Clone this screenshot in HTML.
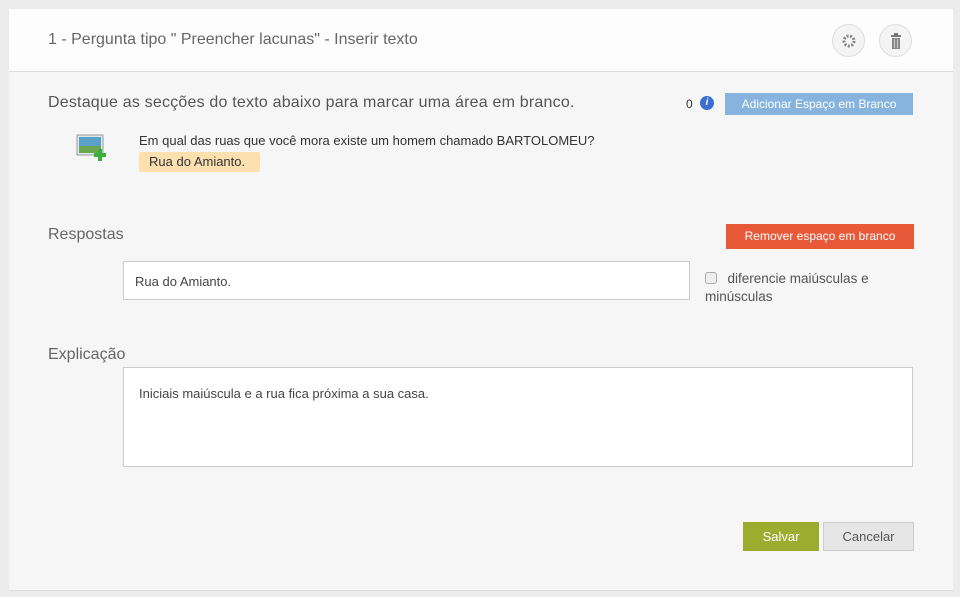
<!DOCTYPE html>
<html><head><meta charset="utf-8"><style>
*{margin:0;padding:0;box-sizing:border-box}
body{width:960px;height:597px;background:#ececec;font-family:"Liberation Sans",sans-serif;position:relative;overflow:hidden;color:#555}
.card{position:absolute;left:9px;top:9px;width:944px;height:582px;background:#f6f6f6;border-bottom:1px solid #ddd}
.hdr{position:absolute;left:0;top:0;width:944px;height:63px;background:#fdfdfd;border-bottom:1px solid #ddd}
.a{position:absolute;white-space:nowrap}
.circ{position:absolute;width:33px;height:33px;border-radius:50%;border:1px solid #ddd;background:#f4f4f4}
.btn{position:absolute;color:#fff;font-size:12px;text-align:center}
.box{position:absolute;background:#fff;border:1px solid #ccc}
</style></head><body>
<div class="card">
<div class="hdr">
<div class="a" style="left:39px;top:22px;font-size:16px;color:#666">1 - Pergunta tipo " Preencher lacunas" - Inserir texto</div>
<div class="circ" style="left:823px;top:15px"><svg width="33" height="33" viewBox="0 0 33 33"><circle cx="16" cy="16" r="5" fill="none" stroke="#888" stroke-width="3" stroke-dasharray="2 1.5"/><circle cx="16" cy="16" r="2" fill="#f4f4f4"/></svg></div>
<div class="circ" style="left:870px;top:15px"><svg width="33" height="33" viewBox="0 0 33 33"><rect x="11" y="10" width="10" height="2" fill="#777"/><rect x="14" y="8" width="4" height="2" fill="#777"/><rect x="12" y="13" width="8" height="11" fill="#888"/><rect x="14" y="14" width="1" height="9" fill="#ccc"/><rect x="17" y="14" width="1" height="9" fill="#ccc"/></svg></div>
</div>
<div class="a" style="left:39px;top:85px;font-size:16px;color:#555;letter-spacing:0.2px">Destaque as secções do texto abaixo para marcar uma área em branco.</div>
<div class="a" style="left:677px;top:88px;font-size:12px;color:#333">0</div>
<div class="a" style="left:691px;top:87px;width:14px;height:14px;border-radius:50%;background:#3a6fd0;color:#fff;font-size:10px;text-align:center;line-height:14px;font-style:italic;font-weight:bold">i</div>
<div class="btn" style="left:716px;top:84px;width:188px;height:22px;line-height:22px;background:#86b4de">Adicionar Espaço em Branco</div>
<svg class="a" style="left:66px;top:124px" width="36" height="30"><rect x="2" y="2" width="26" height="20" fill="#dfe8ee" stroke="#999"/><rect x="4" y="4" width="22" height="16" fill="#5aa0c8"/><rect x="4" y="13" width="22" height="7" fill="#6aa850"/><rect x="23" y="16" width="4" height="12" fill="#3bb03b"/><rect x="19" y="20" width="12" height="4" fill="#3bb03b"/></svg>
<div class="a" style="left:130px;top:124px;font-size:13px;color:#333">Em qual das ruas que você mora existe um homem chamado BARTOLOMEU?</div>
<div class="a" style="left:130px;top:143px;width:121px;height:20px;background:#fde0b0;border-radius:2px;font-size:13px;color:#333;line-height:20px;padding-left:10px">Rua do Amianto.</div>
<div class="a" style="left:39px;top:217px;font-size:16px;color:#666">Respostas</div>
<div class="btn" style="left:717px;top:215px;width:188px;height:25px;line-height:25px;background:#e8593a">Remover espaço em branco</div>
<div class="box" style="left:114px;top:252px;width:567px;height:39px;font-size:13px;color:#444;padding:12px 0 0 11px">Rua do Amianto.</div>
<div class="a" style="left:696px;top:263px;width:12px;height:12px;border:1px solid #aaa;border-radius:3px;background:#eee"></div>
<div class="a" style="left:696px;top:261px;font-size:13.5px;color:#555;line-height:18px;white-space:normal;width:200px">&nbsp; &nbsp; &nbsp; diferencie maiúsculas e minúsculas</div>
<div class="a" style="left:39px;top:337px;font-size:16px;color:#666">Explicação</div>
<div class="box" style="left:114px;top:358px;width:790px;height:100px;font-size:13px;color:#444;padding:18px 0 0 15px">Iniciais maiúscula e a rua fica próxima a sua casa.</div>
<div class="btn" style="left:734px;top:513px;width:76px;height:29px;line-height:29px;background:#9aad2e;font-size:13px">Salvar</div>
<div class="btn" style="left:814px;top:513px;width:91px;height:29px;line-height:27px;background:#e6e6e6;border:1px solid #ccc;color:#555;font-size:13px">Cancelar</div>
</div>
</body></html>
